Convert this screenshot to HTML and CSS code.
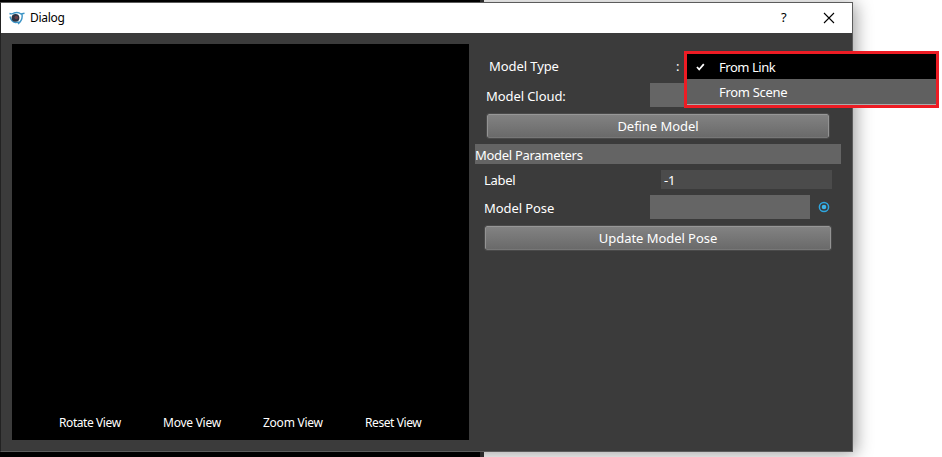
FILE: index.html
```html
<!DOCTYPE html>
<html lang="en">
<head>
<meta charset="utf-8">
<title>Dialog</title>
<link rel="stylesheet" href="styles.css">
</head>
<body>
<main class="dialog">
  <header class="titlebar">
    <svg class="logo" width="16" height="14" viewBox="0 0 16 14"><path d="M.5 2.5Q3 3.5 5 2Q9 .5 12 3L15.5 2.3M13 3.5Q14 9 9 13M1 5.5Q2 10.5 6.5 11.5L11 11" fill="none" stroke="#3b94c6" stroke-width="1.4"/><circle cx="6.5" cy="6.8" r="3.9" fill="#2b3444"/><circle cx="7.3" cy="6.5" r="1.8" fill="#6b3f48"/></svg>
    <h1 class="title">Dialog</h1>
    <span class="help">?</span>
    <svg class="close" width="12" height="12" viewBox="0 0 12 12"><path d="M1 1L11 11M11 1L1 11" stroke="#000" stroke-width="1.1"/></svg>
  </header>
  <div class="content">
    <section class="viewer">
      <nav class="views"><span class="rotate">Rotate View</span><span class="move">Move View</span><span class="zoomv">Zoom View</span><span class="reset">Reset View</span></nav>
    </section>
    <form class="form">
      <div class="row type"><label>Model Type</label><span class="colon">:</span></div>
      <div class="row cloud"><label>Model Cloud:</label><div class="field"></div></div>
      <button class="define" type="button"><span>Define Model</span></button>
      <h2 class="section">Model Parameters</h2>
      <div class="row label"><label>Label</label><div class="value">-1</div></div>
      <div class="row pose"><label>Model Pose</label><div class="field"></div><svg class="radio" width="12" height="12" viewBox="0 0 12 12"><circle cx="6" cy="6" r="4.6" fill="none" stroke="#2ea6df" stroke-width="1.5"/><circle cx="6" cy="6" r="2.3" fill="#3db4e9"/></svg></div>
      <button class="update" type="button"><span>Update Model Pose</span></button>
    </form>
  </div>
</main>
<div class="menu">
  <div class="item selected"><svg class="check" width="9" height="8" viewBox="0 0 9 8"><path d="M1 4L3.2 6.5L7.8 1.2" fill="none" stroke="#fff" stroke-width="1.8"/></svg><span>From Link</span></div>
  <div class="item scene"><span>From Scene</span></div>
</div>
</body>
</html>
```
FILE: styles.css
```css
* { box-sizing: border-box; }
body { margin: 0; height: 457px; overflow: hidden; padding-top: 2px; font: 13px/18px "Noto Sans", sans-serif; letter-spacing: -.08px; color: #fff; background: linear-gradient(90deg, #000 480px, #333 480px 484px, #fff 484px); }
.dialog { width: 853px; height: 450px; background: #3b3b3b; border: 1px solid #5c5c5c; border-left-color: #222; box-shadow: 3px 2px 16px rgba(0,0,0,.38); }
.titlebar { height: 30px; display: flex; align-items: center; background: #fff; color: #000; padding-left: 8px; }
.title { margin: 0 0 0 5px; width: 751px; font-size: 12px; font-weight: 400; letter-spacing: -.3px; }
.help { width: 42px; line-height: 16px; padding-bottom: 2px; }
.content { display: flex; padding: 11px 0 0 11px; }
.viewer { width: 457px; height: 396px; background: #000; display: flex; align-items: flex-end; padding: 0 0 8px 47px; }
.views { display: flex; font-size: 12px; letter-spacing: -.42px; white-space: nowrap; }
.rotate { width: 104px; }
.move { width: 100px; letter-spacing: -.25px; }
.zoomv { width: 102px; letter-spacing: -.25px; }
.form { width: 367px; margin-left: 6px; display: flex; flex-direction: column; }
.row { display: flex; align-items: center; white-space: nowrap; }
.type { height: 39px; padding: 4px 0 0 14px; }
.type label { width: 187px; }
.cloud { height: 24px; padding-left: 11px; }
.cloud label { width: 164px; padding-top: 2px; }
.field { width: 160px; height: 24px; background: #656565; }
.define, .update { height: 24px; margin: 7px 0 0 12px; padding: 0; border: 1px solid #898989; border-color: #979797 #939393 #777; border-radius: 2px; background: linear-gradient(#828282, #6a6a6a); color: #fff; font: inherit; letter-spacing: -.05px; outline: 1px solid #4a4a4a; outline-offset: 0; width: 342px; }
.section { margin: 6px 0 0; height: 20px; width: 366px; background: #646464; font: inherit; line-height: 22px; letter-spacing: -.3px; }
.label { height: 19px; margin-top: 6px; padding-left: 9px; }
.label label { width: 177px; letter-spacing: -.3px; }
.value { width: 171px; height: 19px; background: #4b4b4b; padding-left: 3px; line-height: 21px; }
.pose { height: 24px; margin-top: 6px; padding-left: 9px; }
.pose label { width: 166px; padding-top: 2px; }
.radio { margin-left: 8px; }
.update { margin-left: 10px; width: 346px; }
.menu { position: absolute; left: 684px; top: 51px; width: 255px; height: 57px; border: 3px solid #ed1c24; background: #606060; }
.item { height: 25px; display: flex; align-items: center; padding-left: 32px; }
.selected { background: #000; padding-left: 9px; letter-spacing: -.45px; }
.scene { letter-spacing: -.3px; }
.check { margin-right: 14px; }
.item:last-child { height: 26px; border-bottom: 1px solid #aaa; }
```
